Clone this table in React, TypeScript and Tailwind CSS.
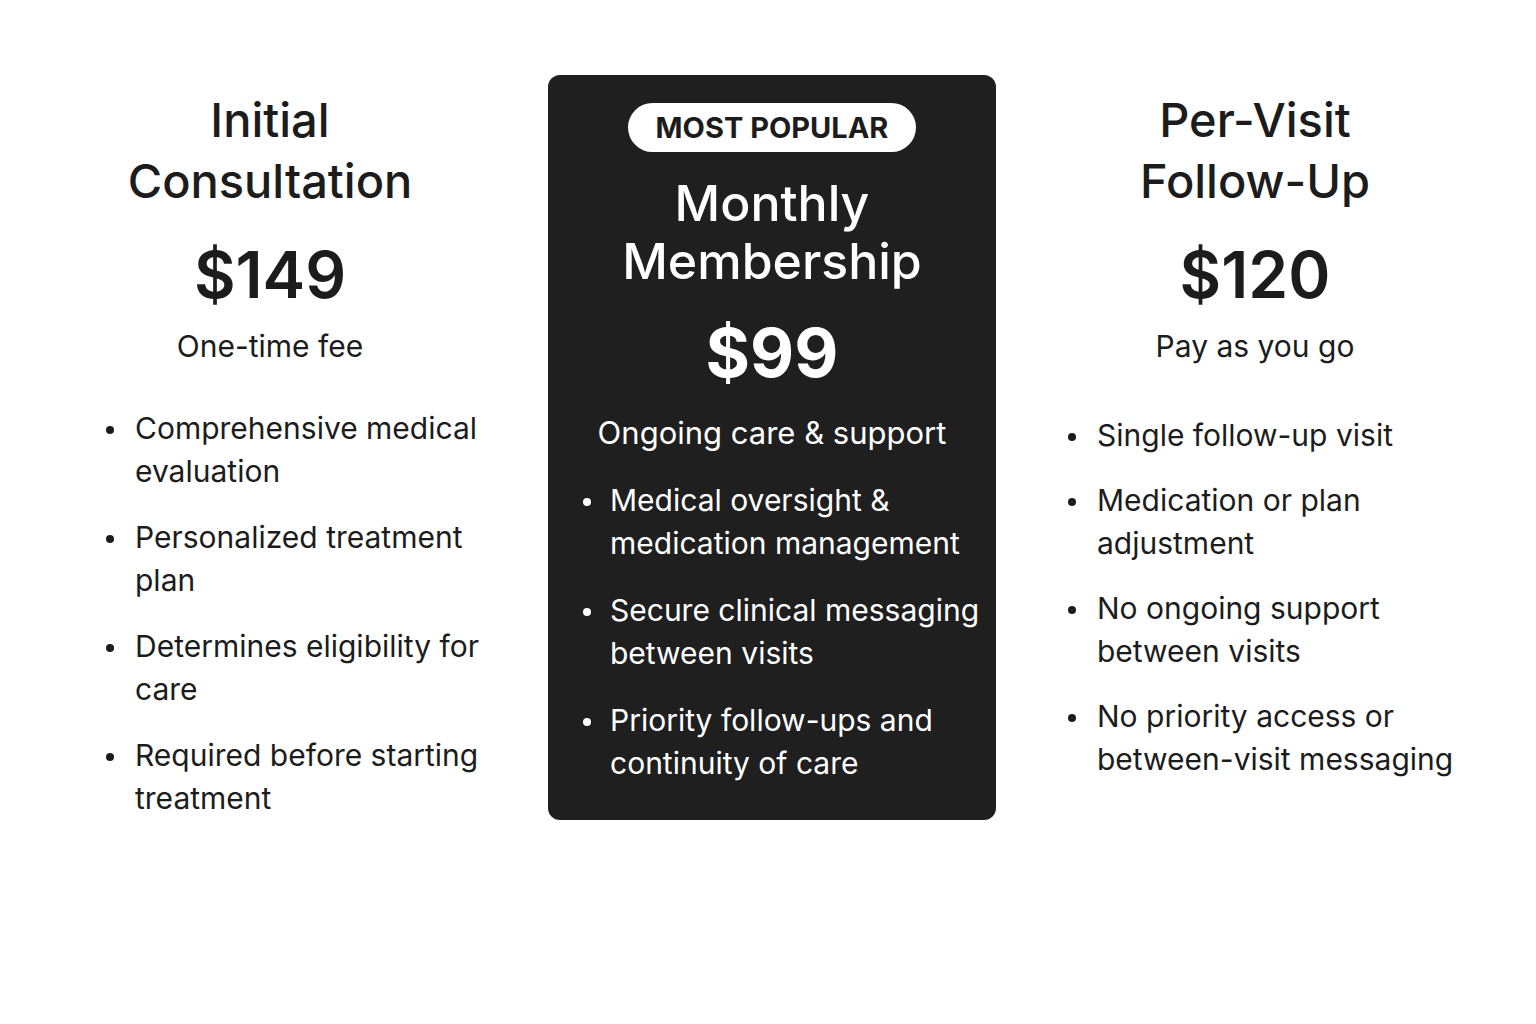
import React from 'react';

type Plan = {
  title: string[];
  price: string;
  note: string;
  features: string[];
};

const initial: Plan = {
  title: ['Initial', 'Consultation'],
  price: '$149',
  note: 'One-time fee',
  features: [
    'Comprehensive medical evaluation',
    'Personalized treatment plan',
    'Determines eligibility for care',
    'Required before starting treatment',
  ],
};

const perVisit: Plan = {
  title: ['Per-Visit', 'Follow-Up'],
  price: '$120',
  note: 'Pay as you go',
  features: [
    'Single follow-up visit',
    'Medication or plan adjustment',
    'No ongoing support between visits',
    'No priority access or between-visit messaging',
  ],
};

const monthly = [
  'Medical oversight & medication management',
  'Secure clinical messaging between visits',
  'Priority follow-ups and continuity of care',
];

const FeatureList = ({
  items,
  dark,
  className,
  textClass,
}: {
  items: string[];
  dark?: boolean;
  className: string;
  textClass: string;
}) => (
  <ul className={className}>
    {items.map((item) => (
      <li key={item} className="flex items-start">
        <span
          className={`mt-[19px] w-[8px] h-[8px] shrink-0 rounded-full ${dark ? 'bg-white' : 'bg-[#1c1c1c]'}`}
        />
        <span className={textClass}>{item}</span>
      </li>
    ))}
  </ul>
);

const SideColumn = ({ plan, listClass, textClass }: { plan: Plan; listClass: string; textClass: string }) => (
  <div className="w-[420px] shrink-0 pt-[14px] text-[#1c1c1c]">
    <div className="w-[400px] flex flex-col items-center text-center">
      <h2 className="text-[47px] leading-[61px] font-medium">
        {plan.title[0]}
        <br />
        {plan.title[1]}
      </h2>
      <div className="mt-[24px] text-[64px] leading-[80px] font-semibold">{plan.price}</div>
      <p className="mt-[11px] text-[30px] leading-[40px]">{plan.note}</p>
    </div>
    <FeatureList items={plan.features} className={listClass} textClass={textClass} />
  </div>
);

export default function App() {
  return (
    <div
      className="w-[1536px] h-[1024px] bg-white overflow-hidden"
      style={{ fontFamily: 'Inter, "Noto Sans", sans-serif' }}
    >
      <div className="flex items-start pt-[75px] pl-[70px]">
        <SideColumn
          plan={initial}
          textClass="ml-[21px] w-[356px]"
          listClass="mt-[41px] pl-[36px] flex flex-col gap-[23px] text-[30px] leading-[43px]"
        />

        <div className="ml-[58px] w-[448px] shrink-0 rounded-[12px] bg-[#1f1f1f] text-white pt-[28px] pb-[35px] flex flex-col items-center">
          <div className="w-[288px] h-[49px] rounded-full bg-white text-[#1c1c1c] flex items-center justify-center text-[29px] font-bold">
            MOST POPULAR
          </div>
          <h2 className="mt-[22px] text-[50px] leading-[58px] font-medium text-center">
            Monthly
            <br />
            Membership
          </h2>
          <div className="mt-[22px] text-[68px] leading-[80px] font-bold">$99</div>
          <p className="mt-[21px] text-[31px] leading-[40px]">Ongoing care &amp; support</p>
          <FeatureList
            items={monthly}
            dark
            textClass="ml-[19px]"
            className="mt-[26px] self-stretch pl-[35px] pr-[6px] flex flex-col gap-[24px] text-[30px] leading-[43px]"
          />
        </div>

        <div className="ml-[59px]">
          <SideColumn
            plan={perVisit}
            textClass="ml-[21px] w-[372px]"
            listClass="mt-[48px] pl-[13px] flex flex-col gap-[22px] text-[30px] leading-[43px]"
          />
        </div>
      </div>
    </div>
  );
}
